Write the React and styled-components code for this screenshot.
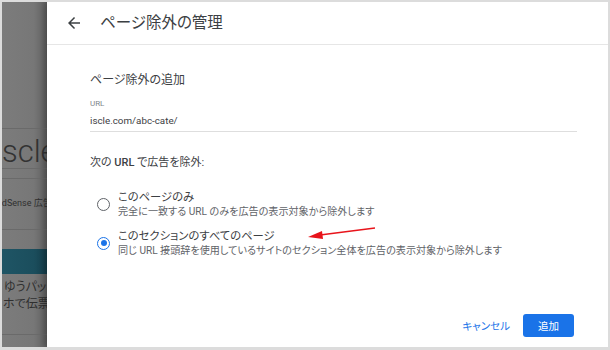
import React from "react";
import styled, { createGlobalStyle } from "styled-components";

const GlobalStyle = createGlobalStyle`
  html, body {
    margin: 0;
    padding: 0;
    background: #ffffff;
  }
  body {
    font-family: Roboto, "Noto Sans CJK JP", sans-serif;
    font-feature-settings: "palt";
  }
`;

const Frame = styled.div`
  position: relative;
  width: 610px;
  height: 350px;
  box-sizing: border-box;
  border: 2px solid #dcdcdc;
  border-bottom-width: 3px;
  display: flex;
  overflow: hidden;
`;

const Backdrop = styled.div`
  width: 45px;
  flex-shrink: 0;
  overflow: hidden;
  background: linear-gradient(to right, #7c7c7c 0%, #777 70%, #626262 100%);
  display: flex;
  flex-direction: column;
  color: #2f2f2f;
`;

const BackLine = styled.div`
  height: 1px;
  background: #6a6a6a;
  margin-top: ${(p) => p.gap}px;
`;

const BackLogo = styled.div`
  font-family: Roboto, sans-serif;
  font-weight: 300;
  font-size: 31px;
  line-height: 26px;
  margin: 10px 0 0 -7px;
  white-space: nowrap;
  color: #333;
`;

const BackText = styled.div`
  font-size: ${(p) => p.size}px;
  line-height: ${(p) => p.lh}px;
  margin: ${(p) => p.top}px 0 0 ${(p) => p.left}px;
  white-space: nowrap;
`;

const BackBar = styled.div`
  height: 25px;
  margin-top: 19px;
  background: linear-gradient(to right, #1f5565 0%, #1b4e5d 70%, #163f4c 100%);
`;

const Panel = styled.div`
  flex: 1;
  background: #fff;
  display: flex;
  flex-direction: column;
  box-shadow: -3px 0 6px rgba(0, 0, 0, 0.25);
  z-index: 1;
`;

const Header = styled.div`
  height: 42px;
  border-bottom: 1px solid #e6e6e6;
  display: flex;
  align-items: center;
  padding-left: 18px;
  gap: 17px;
`;

const BackButton = styled.span`
  display: flex;
  width: 18px;
  height: 18px;
  color: #3c4043;
`;

const Title = styled.h1`
  margin: 0;
  font-size: 15.5px;
  font-weight: 400;
  color: #3c4043;
  line-height: 20px;
`;

const Body = styled.div`
  padding: 0 31px 0 43px;
  display: flex;
  flex-direction: column;
`;

const Heading = styled.h2`
  margin: 27px 0 0;
  font-size: 12px;
  font-weight: 400;
  line-height: 16px;
  color: #3c4043;
`;

const Field = styled.div`
  margin-top: 11px;
  border-bottom: 1px solid #dedede;
  padding-bottom: 3px;
`;

const FieldLabel = styled.div`
  font-size: 8px;
  line-height: 10px;
  color: #80868b;
`;

const FieldValue = styled.div`
  margin-top: 5px;
  font-size: 9.8px;
  line-height: 14px;
  color: #3c4043;
`;

const Question = styled.div`
  margin-top: 24px;
  font-size: 11px;
  line-height: 14px;
  color: #3c4043;

  b {
    font-weight: 500;
  }
`;

const Options = styled.div`
  margin-top: 20px;
  display: flex;
  flex-direction: column;
  gap: 11px;
`;

const Option = styled.label`
  display: flex;
  align-items: center;
  gap: 8px;
  padding-left: 7px;
`;

const Radio = styled.span`
  width: 13px;
  height: 13px;
  box-sizing: border-box;
  border-radius: 50%;
  border: 1.6px solid ${(p) => (p.checked ? "#1a73e8" : "#5f6368")};
  display: flex;
  align-items: center;
  justify-content: center;
  flex-shrink: 0;

  &::after {
    content: "";
    width: 6px;
    height: 6px;
    border-radius: 50%;
    background: ${(p) => (p.checked ? "#1a73e8" : "transparent")};
  }
`;

const OptionText = styled.div`
  display: flex;
  flex-direction: column;
`;

const OptionTitle = styled.div`
  font-size: 11.3px;
  line-height: 15px;
  color: #3c4043;
`;

const OptionHint = styled.div`
  font-size: 10.1px;
  line-height: 13px;
  color: #5f6368;
`;

const Footer = styled.div`
  margin-top: auto;
  display: flex;
  justify-content: flex-end;
  align-items: center;
  gap: 13px;
  padding: 0 34px 10px 0;
`;

const TextButton = styled.button`
  border: none;
  background: none;
  padding: 0;
  font: inherit;
  font-size: 10.5px;
  color: #1a73e8;
`;

const PrimaryButton = styled.button`
  width: 51px;
  height: 23px;
  border: none;
  border-radius: 3px;
  background: #1a73e8;
  color: #fff;
  font: inherit;
  font-size: 10.5px;
  padding: 0;
`;

const Annotation = styled.svg`
  position: absolute;
  left: 300px;
  top: 220px;
  width: 80px;
  height: 24px;
  z-index: 2;
`;

const App = () => {
  return (
    <>
      <GlobalStyle />
      <Frame>
        <Backdrop>
          <BackLine gap={126} />
          <BackLogo>iscle</BackLogo>
          <BackLine gap={3} />
          <BackLine gap={9} />
          <BackText size={9} lh={12} top={18} left={-6}>
            AdSense 広告の
          </BackText>
          <BackLine gap={20} />
          <BackBar />
          <BackText size={12} lh={17} top={5} left={2}>
            ゆうパック
          </BackText>
          <BackText size={12} lh={17} top={0} left={1}>
            ホで伝票作成
          </BackText>
          <BackLine gap={21} />
        </Backdrop>
        <Panel>
          <Header>
            <BackButton>
              <svg viewBox="0 0 24 24" width="18" height="18">
                <path
                  d="M20 11H7.83l5.59-5.59L12 4l-8 8 8 8 1.41-1.41L7.83 13H20v-2z"
                  fill="currentColor"
                />
              </svg>
            </BackButton>
            <Title>ページ除外の管理</Title>
          </Header>
          <Body>
            <Heading>ページ除外の追加</Heading>
            <Field>
              <FieldLabel>URL</FieldLabel>
              <FieldValue>iscle.com/abc-cate/</FieldValue>
            </Field>
            <Question>
              次の <b>URL</b> で広告を除外:
            </Question>
            <Options>
              <Option>
                <Radio />
                <OptionText>
                  <OptionTitle>このページのみ</OptionTitle>
                  <OptionHint>
                    完全に一致する URL のみを広告の表示対象から除外します
                  </OptionHint>
                </OptionText>
              </Option>
              <Option>
                <Radio checked />
                <OptionText>
                  <OptionTitle>このセクションのすべてのページ</OptionTitle>
                  <OptionHint>
                    同じ URL 接頭辞を使用しているサイトのセクション全体を広告の表示対象から除外します
                  </OptionHint>
                </OptionText>
              </Option>
            </Options>
          </Body>
          <Footer>
            <TextButton>キャンセル</TextButton>
            <PrimaryButton>追加</PrimaryButton>
          </Footer>
        </Panel>
        <Annotation viewBox="0 0 80 24">
          <line x1="73" y1="6" x2="18" y2="13" stroke="#e8141b" strokeWidth="1.6" />
          <polygon points="6,15 20,9 21,17" fill="#e8141b" />
        </Annotation>
      </Frame>
    </>
  );
};

export default App;
